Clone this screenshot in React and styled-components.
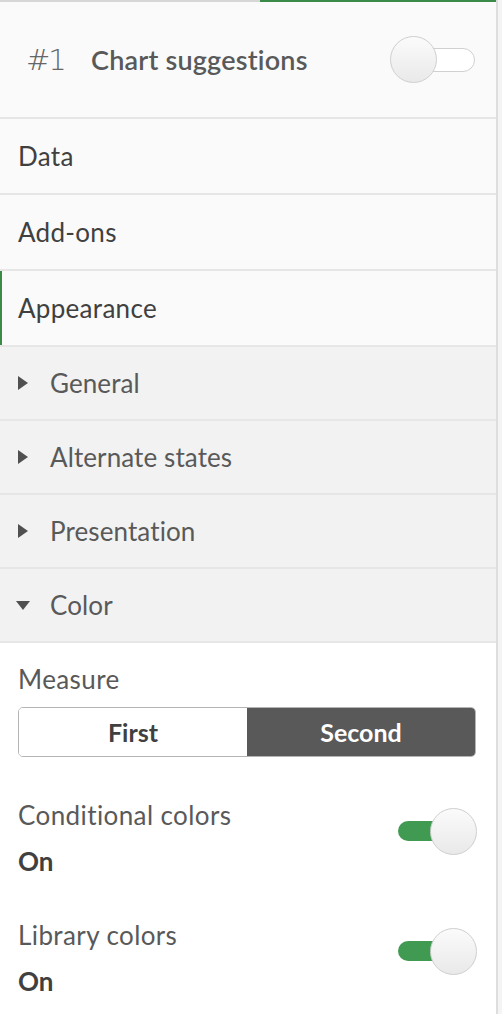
import React from "react";
import styled, { createGlobalStyle } from "styled-components";

const GlobalStyle = createGlobalStyle`
  html, body { margin: 0; padding: 0; background: #f4f4f4; }
  body { font-family: Lato, "Open Sans", sans-serif; -webkit-font-smoothing: antialiased; }
  * { box-sizing: border-box; }
`;

const Panel = styled.div`
  width: 498px;
  min-height: 1014px;
  background: #ffffff;
  border-right: 2px solid #dedede;
  display: flex;
  flex-direction: column;
`;

const TopBar = styled.div`
  display: flex;
  height: 2px;
`;

const TopSeg = styled.div`
  flex: ${(p) => (p.$active ? "1 1 auto" : "0 0 260px")};
  background: ${(p) => (p.$active ? "#3a8a48" : "#d6d6d6")};
`;

const Header = styled.div`
  height: 117px;
  display: flex;
  align-items: center;
  padding: 0 20px 0 26px;
  background: #fafafa;
  border-bottom: 2px solid #e6e6e6;
`;

const Number = styled.span`
  font-family: "DejaVu Sans", sans-serif;
  font-weight: 200;
  font-size: 29px;
  color: #666666;
  width: 65px;
  letter-spacing: -2px;
`;

const HeaderTitle = styled.span`
  flex: 1;
  font-size: 27px;
  font-weight: 600;
  letter-spacing: 0.2px;
  color: #595959;
`;

const NavRow = styled.div`
  height: 76px;
  display: flex;
  align-items: center;
  padding-left: 18px;
  background: #fafafa;
  border-bottom: 2px solid #e6e6e6;
  box-shadow: ${(p) => (p.$active ? "inset 2px 0 0 #3a8a48" : "none")};
  font-size: 26px;
  letter-spacing: 0.3px;
  color: #404040;
`;

const SectionRow = styled.div`
  height: 74px;
  display: flex;
  align-items: center;
  padding-left: 18px;
  background: #f2f2f2;
  border-bottom: 2px solid #e6e6e6;
  font-size: 26px;
  letter-spacing: 0.1px;
  color: #595959;
`;

const Caret = styled.span`
  width: 32px;
  display: flex;
  align-items: center;
  margin-left: ${(p) => (p.$open ? "-2px" : "0")};
  margin-right: ${(p) => (p.$open ? "2px" : "0")};
  &::before {
    content: "";
    display: block;
    border-style: solid;
    border-color: transparent;
    ${(p) =>
      p.$open
        ? `border-width: 9px 7px 0 7px; border-top-color: #505050;`
        : `border-width: 7px 0 7px 10px; border-left-color: #505050;`}
  }
`;

const Body = styled.div`
  display: flex;
  flex-direction: column;
  padding: 22px 20px 0 18px;
`;

const Label = styled.div`
  font-size: 26px;
  line-height: 28px;
  letter-spacing: 0.4px;
  color: #595959;
`;

const ButtonGroup = styled.div`
  margin-top: 14px;
  display: grid;
  grid-template-columns: 228px 1fr;
  height: 50px;
  border: 1.5px solid #b4b4b4;
  border-radius: 5px;
  overflow: hidden;
`;

const SegButton = styled.div`
  display: flex;
  align-items: center;
  justify-content: center;
  font-size: 25px;
  font-weight: 700;
  background: ${(p) => (p.$selected ? "#595959" : "#ffffff")};
  color: ${(p) => (p.$selected ? "#ffffff" : "#404040")};
`;

const SettingRow = styled.div`
  display: flex;
  justify-content: space-between;
  align-items: flex-start;
  margin-top: ${(p) => p.$gap}px;
`;

const SettingText = styled.div`
  display: flex;
  flex-direction: column;
  gap: 18px;
`;

const Value = styled.div`
  font-size: 26px;
  line-height: 28px;
  font-weight: 700;
  color: #404040;
`;

const Toggle = styled.div`
  position: relative;
  width: 78px;
  height: ${(p) => (p.$on ? 20 : 24)}px;
  border-radius: 12px;
  margin-top: ${(p) => p.$top || 0}px;
  background: ${(p) => (p.$on ? "#409a52" : "#ffffff")};
  border: ${(p) => (p.$on ? "none" : "1.5px solid #d0d0d0")};
`;

const Knob = styled.div`
  position: absolute;
  top: 50%;
  left: ${(p) => (p.$on ? "32px" : "-8px")};
  width: 47px;
  height: 47px;
  margin-top: -23.5px;
  border-radius: 50%;
  background: linear-gradient(#fbfbfb, #e9e9e9);
  border: 1.5px solid #cfcfcf;
`;

const HeaderToggle = styled(Toggle)`
  margin-right: 1px;
`;

export default function App() {
  return (
    <>
      <GlobalStyle />
      <Panel>
        <TopBar>
          <TopSeg />
          <TopSeg $active />
        </TopBar>
        <Header>
          <Number>#1</Number>
          <HeaderTitle>Chart suggestions</HeaderTitle>
          <HeaderToggle>
            <Knob />
          </HeaderToggle>
        </Header>
        <NavRow>Data</NavRow>
        <NavRow>Add-ons</NavRow>
        <NavRow $active>Appearance</NavRow>
        <SectionRow>
          <Caret />
          General
        </SectionRow>
        <SectionRow>
          <Caret />
          Alternate states
        </SectionRow>
        <SectionRow>
          <Caret />
          Presentation
        </SectionRow>
        <SectionRow>
          <Caret $open />
          Color
        </SectionRow>
        <Body>
          <Label>Measure</Label>
          <ButtonGroup>
            <SegButton>First</SegButton>
            <SegButton $selected>Second</SegButton>
          </ButtonGroup>
          <SettingRow $gap={44}>
            <SettingText>
              <Label>Conditional colors</Label>
              <Value>On</Value>
            </SettingText>
            <Toggle $on $top={20}>
              <Knob $on />
            </Toggle>
          </SettingRow>
          <SettingRow $gap={46}>
            <SettingText>
              <Label>Library colors</Label>
              <Value>On</Value>
            </SettingText>
            <Toggle $on $top={20}>
              <Knob $on />
            </Toggle>
          </SettingRow>
        </Body>
      </Panel>
    </>
  );
}
